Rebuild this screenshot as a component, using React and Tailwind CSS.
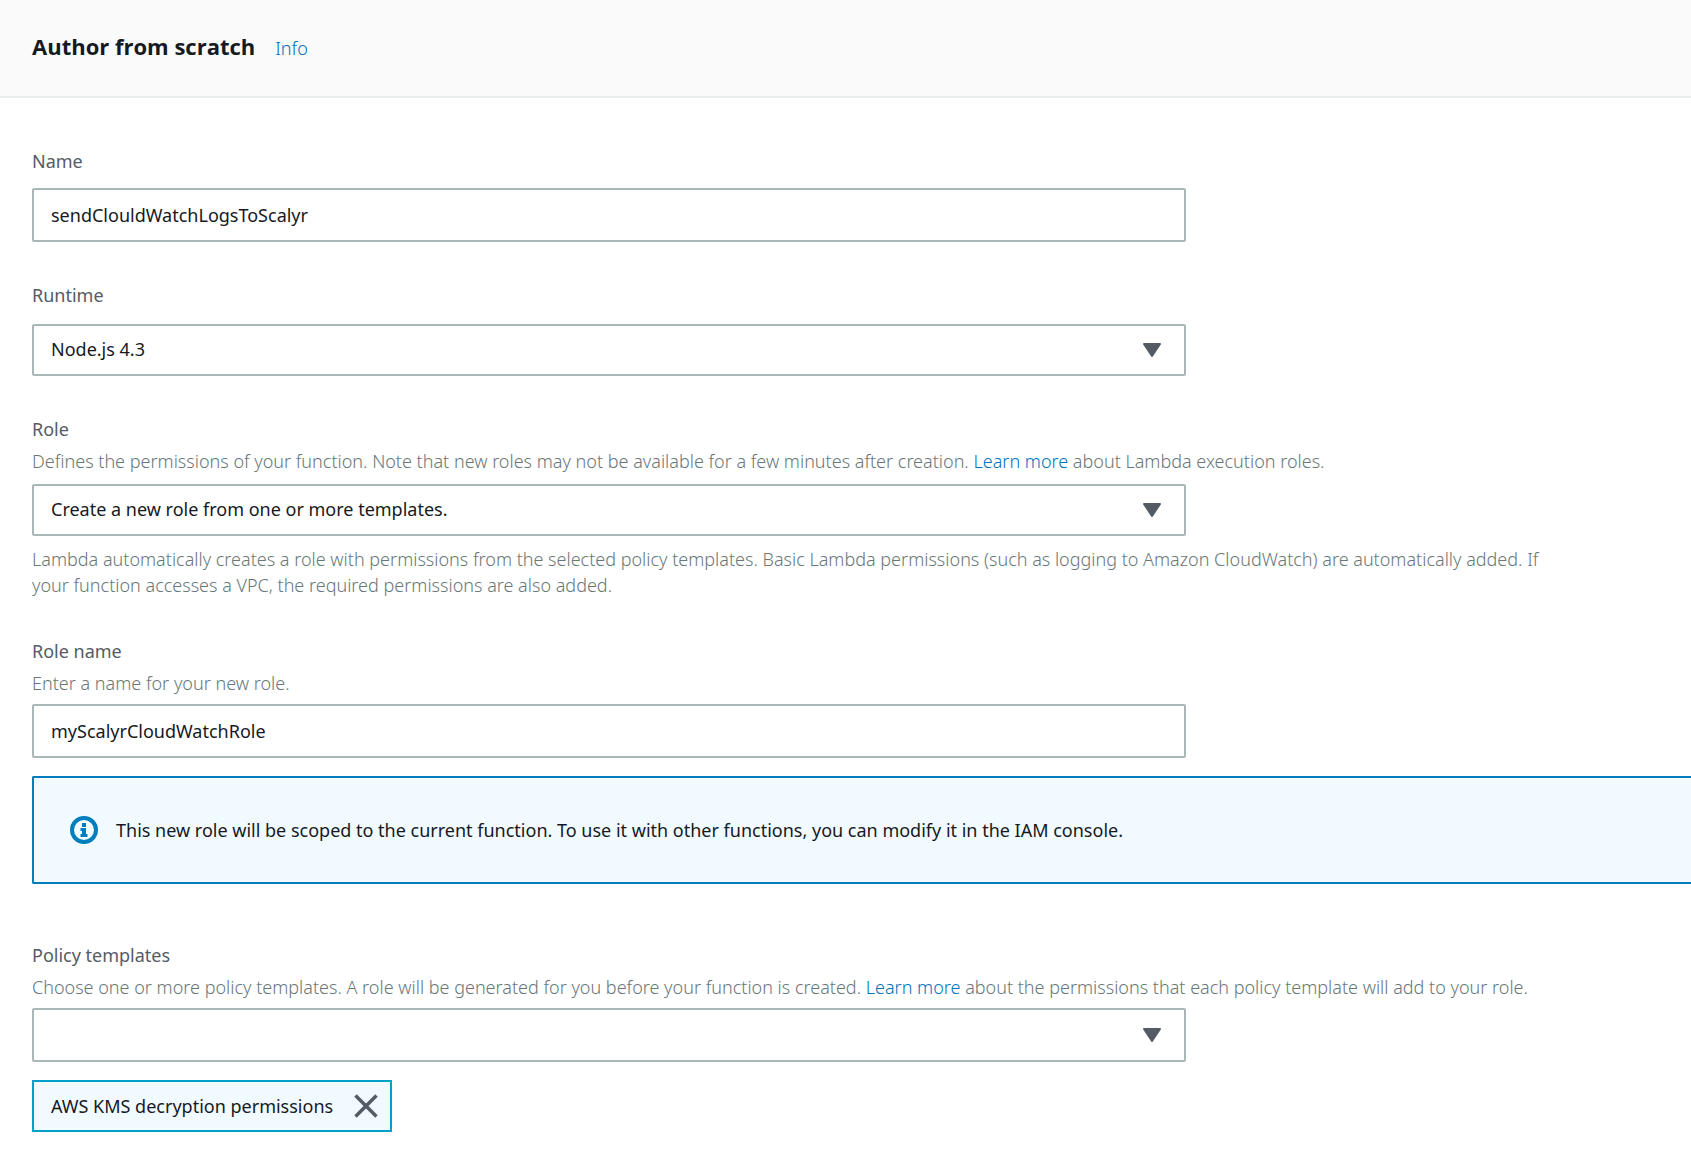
import { useState } from "react";

const RUNTIMES = ["Node.js 4.3", "Node.js 6.10", "Python 2.7", "Python 3.6", "Java 8"];

const ROLES = [
  "Create a new role from one or more templates.",
  "Choose an existing role",
  "Create a custom role",
];

const TEMPLATES = ["AWS KMS decryption permissions", "S3 object read-only permissions"];

const control =
  "block w-full rounded-xs border-2 border-[#aab7b8] bg-white px-[17px] text-[#16191f]";

const hint = "font-light text-[#687778]";

function Label({ htmlFor, children }) {
  return (
    <label htmlFor={htmlFor} className="block text-[#545b64]">
      {children}
    </label>
  );
}

function Hint({ children }) {
  return <p className={`${hint} mt-1.5`}>{children}</p>;
}

function LearnMore() {
  return (
    <a href="#learn-more" className="text-[#0073bb] hover:underline">
      Learn more
    </a>
  );
}

function TextInput({ id, value, onChange }) {
  return (
    <input
      id={id}
      type="text"
      value={value}
      onChange={(e) => onChange(e.target.value)}
      className={`${control} h-[54px] max-w-[1154px]`}
    />
  );
}

function Select({ id, value, onChange, options, size = "h-[52px]" }) {
  return (
    <div className="relative max-w-[1154px]">
      <select
        id={id}
        value={value}
        onChange={(e) => onChange(e.target.value)}
        className={`${control} ${size} appearance-none pb-0.5`}
      >
        {options.map((option) => (
          <option key={option} value={option}>
            {option}
          </option>
        ))}
      </select>
      <svg
        viewBox="0 0 18 14"
        className="pointer-events-none absolute inset-y-0 right-[25px] my-auto h-3.5 w-[18px]"
        aria-hidden="true"
      >
        <path d="M1 1h16l-8 12z" fill="#545b64" stroke="#545b64" strokeWidth="2" strokeLinejoin="round" />
      </svg>
    </div>
  );
}

function InfoIcon() {
  return (
    <svg viewBox="0 0 28 28" className="size-7 shrink-0" aria-hidden="true">
      <circle cx="14" cy="14" r="12" fill="none" stroke="#007dbc" strokeWidth="4" />
      <path d="M12 7h4v4h-4zM10.500 12H16v6h1.500v3h-7v-3H12v-3h-1.500z" fill="#007dbc" />
    </svg>
  );
}

function App() {
  const [name, setName] = useState("sendClouldWatchLogsToScalyr");
  const [runtime, setRuntime] = useState(RUNTIMES[0]);
  const [role, setRole] = useState(ROLES[0]);
  const [roleName, setRoleName] = useState("myScalyrCloudWatchRole");
  const [selected, setSelected] = useState([TEMPLATES[0]]);

  const addTemplate = (template) => {
    if (template && !selected.includes(template)) {
      setSelected([...selected, template]);
    }
  };

  return (
    <div className="min-h-screen bg-white font-['Noto_Sans','Open_Sans',sans-serif] text-[18px] leading-[26px] text-[#16191f]">
      <header className="flex items-baseline gap-5 border-b-2 border-[#eaeded] bg-[#fafafa] px-8 pt-7 pb-8">
        <h1 className="font-['Open_Sans',sans-serif] text-[22px] leading-9 font-bold">
          Author from scratch
        </h1>
        <a href="#info" className="font-light text-[#0073bb] hover:underline">
          Info
        </a>
      </header>

      <form className="pt-[50px] pb-8 pl-8" onSubmit={(e) => e.preventDefault()}>
        <div className="flex flex-col gap-10">
          <div>
            <Label htmlFor="name">Name</Label>
            <div className="mt-3.5">
              <TextInput id="name" value={name} onChange={setName} />
            </div>
          </div>

          <div>
            <Label htmlFor="runtime">Runtime</Label>
            <div className="mt-4">
              <Select id="runtime" value={runtime} onChange={setRuntime} options={RUNTIMES} />
            </div>
          </div>

          <div>
            <Label htmlFor="role">Role</Label>
            <Hint>
              Defines the permissions of your function. Note that new roles may not be available for
              a few minutes after creation. <LearnMore /> about Lambda execution roles.
            </Hint>
            <div className="mt-2.5">
              <Select id="role" value={role} onChange={setRole} options={ROLES} />
            </div>
            <p className={`${hint} mt-2.5 max-w-[1540px]`}>
              Lambda automatically creates a role with permissions from the selected policy
              templates. Basic Lambda permissions (such as logging to Amazon CloudWatch) are
              automatically added. If your function accesses a VPC, the required permissions are
              also added.
            </p>
          </div>

          <div>
            <Label htmlFor="role-name">Role name</Label>
            <Hint>Enter a name for your new role.</Hint>
            <div className="mt-2">
              <TextInput id="role-name" value={roleName} onChange={setRoleName} />
            </div>
            <div className="mt-[18px] flex h-[108px] items-center gap-[18px] rounded-l-xs border-2 border-r-0 border-[#007dbc] bg-[#f1faff] pl-9">
              <InfoIcon />
              <p>
                This new role will be scoped to the current function. To use it with other
                functions, you can modify it in the IAM console.
              </p>
            </div>
          </div>
        </div>

        <div className="mt-[58px]">
          <Label htmlFor="templates">Policy templates</Label>
          <Hint>
            Choose one or more policy templates. A role will be generated for you before your
            function is created. <LearnMore /> about the permissions that each policy template will
            add to your role.
          </Hint>
          <div className="mt-2">
            <Select
              id="templates"
              value=""
              onChange={addTemplate}
              options={["", ...TEMPLATES]}
              size="h-[54px]"
            />
          </div>
          <div className="mt-[18px] flex flex-wrap gap-3">
            {selected.map((template) => (
              <div
                key={template}
                className="flex h-[52px] items-center gap-[21px] border-2 border-[#00a1c9] bg-[#f1faff] pr-3 pl-[17px]"
              >
                <span>{template}</span>
                <button
                  type="button"
                  aria-label={`Remove ${template}`}
                  onClick={() => setSelected(selected.filter((t) => t !== template))}
                >
                  <svg viewBox="0 0 24 24" className="size-6" aria-hidden="true">
                    <path d="M1.500 1.500l21 21M22.500 1.500l-21 21" stroke="#545b64" strokeWidth="3.500" />
                  </svg>
                </button>
              </div>
            ))}
          </div>
        </div>
      </form>
    </div>
  );
}

export default App;
